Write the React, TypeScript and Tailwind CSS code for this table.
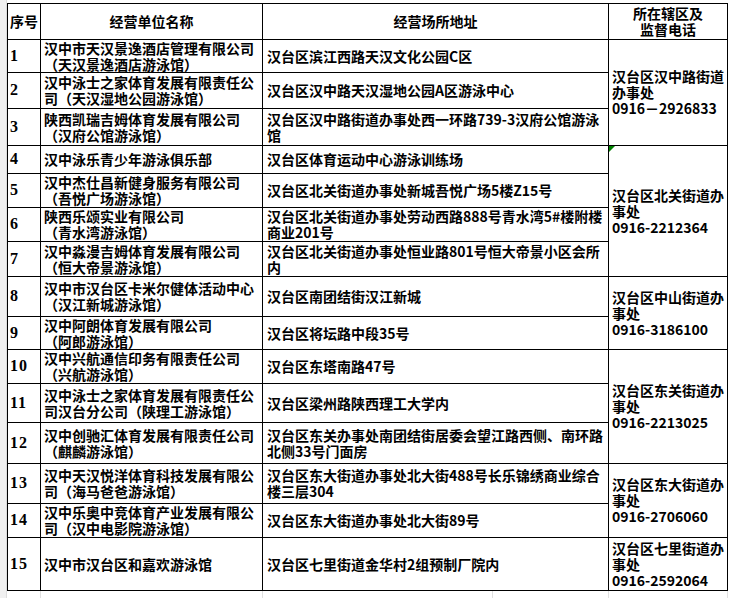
import React from 'react';

type Row = { no: string; name: string[]; addr: string[] };

const rows: Row[] = [
  { no: '1', name: ['汉中市天汉景逸酒店管理有限公司', '（天汉景逸酒店游泳馆）'], addr: ['汉台区滨江西路天汉文化公园C区'] },
  { no: '2', name: ['汉中泳士之家体育发展有限责任公', '司（天汉湿地公园游泳馆）'], addr: ['汉台区汉中路天汉湿地公园A区游泳中心'] },
  { no: '3', name: ['陕西凯瑞吉姆体育发展有限公司', '（汉府公馆游泳馆）'], addr: ['汉台区汉中路街道办事处西一环路739-3汉府公馆游泳', '馆'] },
  { no: '4', name: ['汉中泳乐青少年游泳俱乐部'], addr: ['汉台区体育运动中心游泳训练场'] },
  { no: '5', name: ['汉中杰仕昌新健身服务有限公司', '（吾悦广场游泳馆）'], addr: ['汉台区北关街道办事处新城吾悦广场5楼Z15号'] },
  { no: '6', name: ['陕西乐颂实业有限公司', '（青水湾游泳馆）'], addr: ['汉台区北关街道办事处劳动西路888号青水湾5#楼附楼', '商业201号'] },
  { no: '7', name: ['汉中淼漫吉姆体育发展有限公司', '（恒大帝景游泳馆）'], addr: ['汉台区北关街道办事处恒业路801号恒大帝景小区会所', '内'] },
  { no: '8', name: ['汉中市汉台区卡米尔健体活动中心', '（汉江新城游泳馆）'], addr: ['汉台区南团结街汉江新城'] },
  { no: '9', name: ['汉中阿朗体育发展有限公司', '（阿郎游泳馆）'], addr: ['汉台区将坛路中段35号'] },
  { no: '10', name: ['汉中兴航通信印务有限责任公司', '（兴航游泳馆）'], addr: ['汉台区东塔南路47号'] },
  { no: '11', name: ['汉中泳士之家体育发展有限责任公', '司汉台分公司（陕理工游泳馆）'], addr: ['汉台区梁州路陕西理工大学内'] },
  { no: '12', name: ['汉中创驰汇体育发展有限责任公司', '（麒麟游泳馆）'], addr: ['汉台区东关办事处南团结街居委会望江路西侧、南环路', '北侧33号门面房'] },
  { no: '13', name: ['汉中天汉悦洋体育科技发展有限公', '司（海马爸爸游泳馆）'], addr: ['汉台区东大街道办事处北大街488号长乐锦绣商业综合', '楼三层304'] },
  { no: '14', name: ['汉中乐奥中竞体育产业发展有限公', '司（汉中电影院游泳馆）'], addr: ['汉台区东大街道办事处北大街89号'] },
  { no: '15', name: ['汉中市汉台区和嘉欢游泳馆'], addr: ['汉台区七里街道金华村2组预制厂院内'] },
];

// supervising office cells, keyed by the row they start on
const offices: Record<string, { span: string; lines: string[]; mark?: boolean }> = {
  '1': { span: 'row-span-3', lines: ['汉台区汉中路街道', '办事处', '0916－2926833'] },
  '4': { span: 'row-span-4', lines: ['汉台区北关街道办', '事处', '0916-2212364'], mark: true },
  '8': { span: 'row-span-2', lines: ['汉台区中山街道办', '事处', '0916-3186100'] },
  '10': { span: 'row-span-3', lines: ['汉台区东关街道办', '事处', '0916-2213025'] },
  '13': { span: 'row-span-2', lines: ['汉台区东大街道办', '事处', '0916-2706060'] },
  '15': { span: 'row-span-1', lines: ['汉台区七里街道办', '事处', '0916-2592064'] },
};

function Lines({ lines }: { lines: string[] }) {
  return (
    <div className="whitespace-nowrap">
      {lines.map((l, i) => (
        <div key={i}>{l}</div>
      ))}
    </div>
  );
}

export default function App() {
  return (
    <div className="w-[731px] h-[598px] bg-white overflow-hidden flex text-black font-bold text-[14px] leading-[16px] font-['Noto_Sans_CJK_SC','Noto_Sans',sans-serif]">
      <div className="w-[7px] shrink-0 bg-[#f0f0f0] border-r border-[#dcdcdc]" />
      <div className="flex flex-col">
        <div className="h-[3px]" />
        <div className="grid grid-cols-[32px_221px_345px_118px] grid-rows-[35px_32px_35px_36px_27px_33px_33px_34px_39px_32px_33px_38px_40px_39px_33px_52px] gap-px bg-black border border-black">
          <div className="bg-white flex items-center justify-center">序号</div>
          <div className="bg-white flex items-center justify-center">经营单位名称</div>
          <div className="bg-white flex items-center justify-center">经营场所地址</div>
          <div className="bg-white flex items-center justify-center text-center">
            <Lines lines={['所在辖区及', '监督电话']} />
          </div>
          {rows.map((r) => {
            const office = offices[r.no];
            return (
              <React.Fragment key={r.no}>
                <div className="bg-white flex items-center pl-[2px] text-[16px] tracking-[1px] font-['Liberation_Serif',serif]">{r.no}</div>
                <div className="bg-white flex items-center pl-[3px]">
                  <Lines lines={r.name} />
                </div>
                <div className="bg-white flex items-center pl-[4px]">
                  <Lines lines={r.addr} />
                </div>
                {office && (
                  <div className={`${office.span} relative bg-white flex items-center pl-[3px]`}>
                    {office.mark && (
                      <span className="absolute top-0 left-0 w-0 h-0 border-t-[6px] border-t-[#008000] border-r-[6px] border-r-transparent" />
                    )}
                    <Lines lines={office.lines} />
                  </div>
                )}
              </React.Fragment>
            );
          })}
        </div>
        <div className="flex h-[8px]">
          <div className="w-[34px] border-r border-[#e0e0e0]" />
          <div className="w-[222px] border-r border-[#e0e0e0]" />
          <div className="w-[230px] border-r border-[#e0e0e0]" />
          <div className="w-[116px] border-r border-[#e0e0e0]" />
          <div className="w-[119px] border-r border-[#e0e0e0]" />
        </div>
      </div>
    </div>
  );
}
